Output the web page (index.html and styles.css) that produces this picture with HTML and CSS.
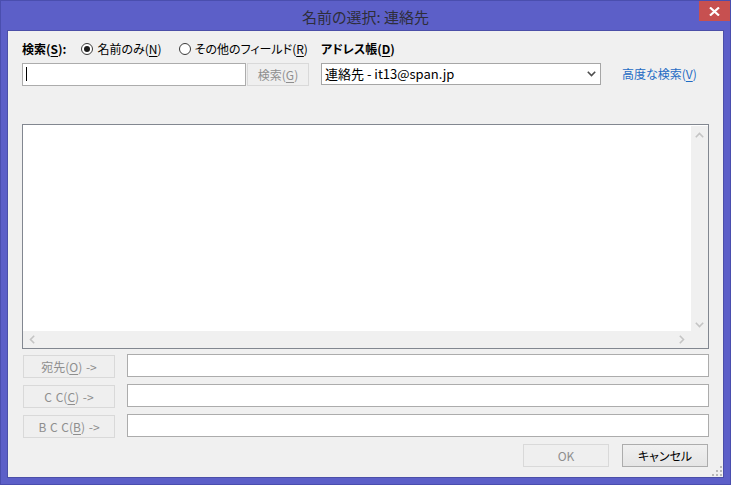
FILE: index.html
```html
<!DOCTYPE html>
<html lang="ja">
<head>
    <meta charset="UTF-8">
    <title>名前の選択: 連絡先</title>
    <link rel="stylesheet" href="styles.css">
</head>
<body>
    <div class="window">
        <div class="titlebar">
            <span class="title">名前の選択: 連絡先</span>
            <span class="close">
                <svg width="11" height="9" viewBox="0 0 11 9"><path d="M1 0.5 L10 8.5 M10 0.5 L1 8.5" stroke="#fff" stroke-width="2.2"/></svg>
            </span>
        </div>
        <div class="client">
            <div class="search-area">
                <div class="col-search">
                    <div class="label-row">
                        <span class="label-bold">検索(<u>S</u>):</span>
                        <span class="radio"><span class="radio-circle checked"></span>名前のみ(<u>N</u>)</span>
                        <span class="radio"><span class="radio-circle"></span>その他のフィールド(<u>R</u>)</span>
                    </div>
                    <div class="control-row">
                        <div class="textbox search-box"><span class="caret"></span></div>
                        <div class="btn disabled search-btn">検索(<u>G</u>)</div>
                    </div>
                </div>
                <div class="col-book">
                    <div class="label-row">
                        <span class="label-bold">アドレス帳(<u>D</u>)</span>
                    </div>
                    <div class="control-row">
                        <div class="select">
                            <span>連絡先 - it13@span.jp</span>
                            <svg width="9" height="6" viewBox="0 0 9 6"><path d="M0.8 0.8 L4.5 4.5 L8.2 0.8" fill="none" stroke="#4d4d4d" stroke-width="1.6"/></svg>
                        </div>
                    </div>
                </div>
                <div class="col-link">
                    <a class="adv-link">高度な検索(<u>V</u>)</a>
                </div>
            </div>

            <div class="listbox">
                <div class="list-body"></div>
                <div class="vscroll">
                    <svg width="9" height="6" viewBox="0 0 9 6"><path d="M0.8 5.2 L4.5 1.5 L8.2 5.2" fill="none" stroke="#c4c4c4" stroke-width="1.6"/></svg>
                    <svg width="9" height="6" viewBox="0 0 9 6"><path d="M0.8 0.8 L4.5 4.5 L8.2 0.8" fill="none" stroke="#c4c4c4" stroke-width="1.6"/></svg>
                </div>
                <div class="hscroll">
                    <svg width="6" height="9" viewBox="0 0 6 9"><path d="M5.2 0.8 L1.5 4.5 L5.2 8.2" fill="none" stroke="#c4c4c4" stroke-width="1.6"/></svg>
                    <svg width="6" height="9" viewBox="0 0 6 9"><path d="M0.8 0.8 L4.5 4.5 L0.8 8.2" fill="none" stroke="#c4c4c4" stroke-width="1.6"/></svg>
                </div>
                <div class="corner"></div>
            </div>

            <div class="recipients">
                <div class="recipient-row">
                    <div class="btn disabled recip-btn">宛先(<u>O</u>) -&gt;</div>
                    <div class="textbox recip-box"></div>
                </div>
                <div class="recipient-row">
                    <div class="btn disabled recip-btn">C&nbsp;C(<u>C</u>) -&gt;</div>
                    <div class="textbox recip-box"></div>
                </div>
                <div class="recipient-row">
                    <div class="btn disabled recip-btn">B&nbsp;C&nbsp;C(<u>B</u>) -&gt;</div>
                    <div class="textbox recip-box"></div>
                </div>
            </div>

            <div class="footer">
                <div class="btn disabled footer-btn">OK</div>
                <div class="btn footer-btn">キャンセル</div>
            </div>

            <svg class="grip" width="10" height="10" viewBox="0 0 10 10">
                <rect x="8" y="0" width="2" height="2" fill="#b9b9b9"/>
                <rect x="4" y="4" width="2" height="2" fill="#b9b9b9"/>
                <rect x="8" y="4" width="2" height="2" fill="#b9b9b9"/>
                <rect x="0" y="8" width="2" height="2" fill="#b9b9b9"/>
                <rect x="4" y="8" width="2" height="2" fill="#b9b9b9"/>
                <rect x="8" y="8" width="2" height="2" fill="#b9b9b9"/>
            </svg>
        </div>
    </div>
</body>
</html>
```

FILE: styles.css
```css
body {
    margin: 0;
    font-family: "Noto Sans CJK JP", "Noto Sans", sans-serif;
    font-size: 12px;
    line-height: 16px;
    font-feature-settings: "palt";
    color: #000;
    background-color: #5c5fc8;
}
u {
    text-decoration: underline;
    text-underline-offset: 2px;
}
.window {
    width: 731px;
    height: 485px;
    box-sizing: border-box;
    border: 1px solid #4a4eae;
    background-color: #5c5fc8;
    padding: 0 7px 7px 7px;
    display: flex;
    flex-direction: column;
}
.titlebar {
    position: relative;
    flex-shrink: 0;
    height: 30px;
    display: flex;
    align-items: center;
    justify-content: center;
}
.title {
    font-size: 15px;
    color: #2e2e3a;
    padding-top: 1px;
}
.close {
    position: absolute;
    right: -7px;
    top: 0;
    width: 31px;
    height: 20px;
    background-color: #c75050;
    display: flex;
    align-items: center;
    justify-content: center;
}
.client {
    position: relative;
    flex: 1;
    min-height: 0;
    background-color: #f0f0f0;
    box-shadow: 0 0 0 1px #4b4fa8;
    padding: 10px 14px 10px 14px;
}
.search-area {
    display: flex;
    gap: 12px;
}
.col-search {
    width: 287px;
}
.col-book {
    width: 280px;
}
.col-link {
    margin-left: 9px;
    padding-top: 25px;
}
.label-row {
    height: 16px;
    display: flex;
    align-items: center;
    white-space: nowrap;
}
.label-bold {
    font-weight: bold;
}
.radio {
    display: flex;
    align-items: center;
    margin-left: 15px;
}
.radio + .radio {
    margin-left: 17px;
}
.radio-circle {
    width: 10px;
    height: 10px;
    border: 1px solid #3a3a3a;
    border-radius: 50%;
    background-color: #fff;
    margin-right: 4px;
    position: relative;
}
.radio-circle.checked::after {
    content: "";
    position: absolute;
    left: 2px;
    top: 2px;
    width: 6px;
    height: 6px;
    border-radius: 50%;
    background-color: #1a1a1a;
}
.control-row {
    display: flex;
    margin-top: 6px;
    height: 23px;
}
.textbox {
    box-sizing: border-box;
    background-color: #fff;
    border: 1px solid #acacac;
}
.search-box {
    width: 224px;
    height: 23px;
    padding: 3px 0 0 3px;
}
.caret {
    display: block;
    width: 1px;
    height: 14px;
    background-color: #000;
}
.btn {
    box-sizing: border-box;
    display: flex;
    align-items: center;
    justify-content: center;
    border: 1px solid #acacac;
    background: linear-gradient(#f0f0f0, #e5e5e5);
    white-space: nowrap;
}
.btn.disabled {
    border-color: #d9d9d9;
    background: #efefef;
    color: #8e8e8e;
}
.search-btn {
    width: 62px;
    height: 23px;
    margin-left: 1px;
}
.select {
    box-sizing: border-box;
    width: 280px;
    height: 22px;
    background-color: #fff;
    border: 1px solid #a6a6a6;
    display: flex;
    align-items: center;
    justify-content: space-between;
    padding: 0 4px 0 3px;
    font-size: 13px;
}
.adv-link {
    color: #1e6bc4;
    white-space: nowrap;
}
.listbox {
    margin-top: 38px;
    height: 225px;
    box-sizing: border-box;
    border: 1px solid #828790;
    background-color: #fff;
    display: grid;
    grid-template-columns: 1fr 17px;
    grid-template-rows: 1fr 17px;
}
.vscroll {
    background-color: #f0f0f0;
    margin-top: 1px;
    display: flex;
    flex-direction: column;
    justify-content: space-between;
    align-items: center;
    padding: 6px 0 3px 0;
}
.hscroll {
    background-color: #f0f0f0;
    display: flex;
    justify-content: space-between;
    align-items: center;
    padding: 0 6px 0 6px;
}
.corner {
    background-color: #f0f0f0;
}
.recipients {
    margin-top: 5px;
    display: flex;
    flex-direction: column;
    gap: 6px;
}
.recipient-row {
    display: flex;
    align-items: flex-start;
    height: 24px;
}
.recip-btn {
    width: 92px;
    height: 24px;
    margin-left: 1px;
    margin-top: 1px;
    height: 23px;
    word-spacing: 1px;
}
.recip-box {
    flex: 1;
    height: 23px;
    margin-left: 12px;
}
.footer {
    margin-top: 6px;
    display: flex;
    justify-content: flex-end;
    gap: 13px;
    padding-right: 1px;
}
.footer-btn {
    width: 86px;
    height: 23px;
}
.grip {
    position: absolute;
    right: 1px;
    bottom: 1px;
}
```
